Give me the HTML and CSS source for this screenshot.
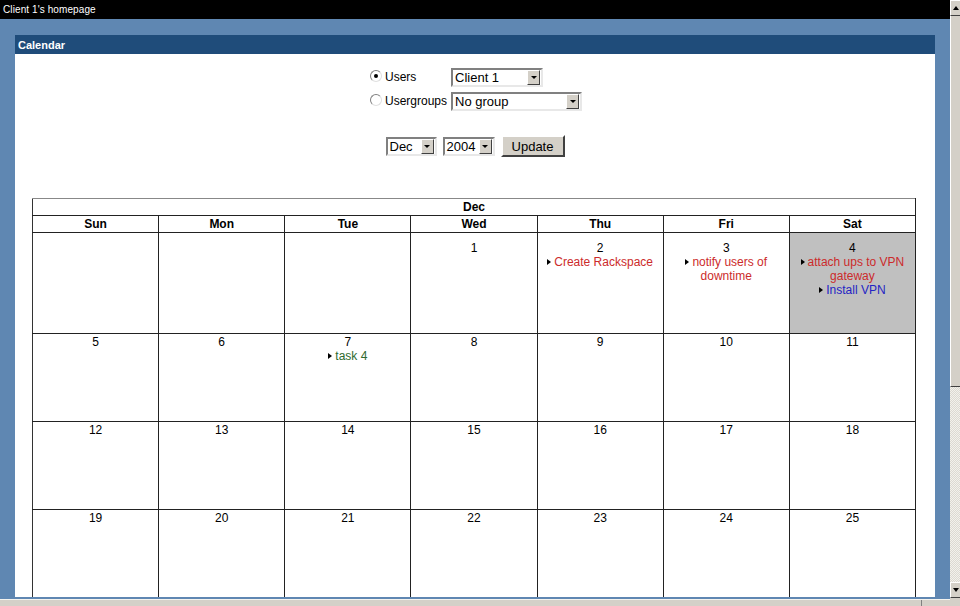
FILE: index.html
```html
<!DOCTYPE html>
<html lang="en">
<head>
  <meta charset="UTF-8">
  <title>Client 1's homepage</title>
  <link rel="stylesheet" href="styles.css">
</head>
<body>
  <div class="window">
    <div class="viewport">
      <div class="titlebar">Client 1's homepage</div>
      <div class="desk">
        <div class="panel">
          <div class="panel-head">Calendar</div>
          <div class="panel-body">
            <form class="picker">
              <table class="who">
                <tr>
                  <td class="opt"><span class="radio on"></span>Users</td>
                  <td><div class="select sel-user"><span class="val">Client 1</span><span class="drop"><i></i></span></div></td>
                </tr>
                <tr>
                  <td class="opt"><span class="radio"></span>Usergroups</td>
                  <td><div class="select sel-group"><span class="val">No group</span><span class="drop"><i></i></span></div></td>
                </tr>
              </table>
              <div class="when">
                <div class="select sel-month"><span class="val">Dec</span><span class="drop"><i></i></span></div>
                <div class="select sel-year"><span class="val">2004</span><span class="drop"><i></i></span></div>
                <button type="button" class="btn">Update</button>
              </div>
            </form>

            <table class="cal">
              <tr><th colspan="7" class="month">Dec</th></tr>
              <tr class="days">
                <th>Sun</th><th>Mon</th><th>Tue</th><th>Wed</th><th>Thu</th><th>Fri</th><th>Sat</th>
              </tr>
              <tr class="week first">
                <td></td>
                <td></td>
                <td></td>
                <td>1</td>
                <td>2<br><span class="ev red"><b class="tri"></b>Create Rackspace</span></td>
                <td>3<br><span class="ev red"><b class="tri"></b>notify users of downtime</span></td>
                <td class="today">4<br><span class="ev red"><b class="tri"></b>attach ups to VPN gateway</span><br><span class="ev blue"><b class="tri"></b>Install VPN</span></td>
              </tr>
              <tr class="week">
                <td>5</td>
                <td>6</td>
                <td>7<br><span class="ev green"><b class="tri"></b>task 4</span></td>
                <td>8</td>
                <td>9</td>
                <td>10</td>
                <td>11</td>
              </tr>
              <tr class="week">
                <td>12</td><td>13</td><td>14</td><td>15</td><td>16</td><td>17</td><td>18</td>
              </tr>
              <tr class="week">
                <td>19</td><td>20</td><td>21</td><td>22</td><td>23</td><td>24</td><td>25</td>
              </tr>
            </table>
          </div>
        </div>
      </div>
      <div class="hscroll"><span class="hthumb"></span></div>
    </div>
    <div class="vscroll">
      <div class="sbtn up"><i></i></div>
      <div class="vthumb"></div>
      <div class="vtrack"></div>
      <div class="sbtn down"><i></i></div>
      <div class="corner"></div>
    </div>
  </div>
</body>
</html>
```

FILE: styles.css
```css
html, body {
  margin: 0;
  padding: 0;
  height: 606px;
  overflow: hidden;
  font-family: "Liberation Sans", Arial, sans-serif;
  font-size: 12px;
}

.window {
  display: flex;
  height: 606px;
}

.viewport {
  width: 950px;
  display: flex;
  flex-direction: column;
  background-color: #5f87b2;
}

.titlebar {
  height: 19px;
  line-height: 20px;
  background: #000;
  color: #fff;
  font-size: 10px;
  padding-left: 3px;
  letter-spacing: 0.1px;
}

.desk {
  flex: 1;
  overflow: hidden;
  padding: 16px 15px 0 15px;
}

.panel {
  background: #fff;
  height: 100%;
}

.panel-head {
  background: #1f4c7a;
  color: #fff;
  font-weight: bold;
  font-size: 11px;
  height: 19px;
  line-height: 20px;
  padding-left: 3px;
}

.panel-body {
  padding-top: 11px;
}

/* user / group / date picker */
.picker {
  margin: 0;
}

.who {
  border-collapse: collapse;
  margin: 0 auto;
  position: relative;
  left: 1px;
}

.who td {
  padding: 0;
  height: 24px;
  vertical-align: middle;
}

.who .opt {
  padding-right: 4px;
  white-space: nowrap;
}

.radio {
  display: inline-block;
  width: 10px;
  height: 10px;
  border-radius: 50%;
  border: 1px solid #808080;
  border-right-color: #e0e0e0;
  border-bottom-color: #e0e0e0;
  background: #fff;
  vertical-align: -1px;
  margin-right: 3px;
  position: relative;
}

.radio.on::after {
  content: "";
  position: absolute;
  left: 3px;
  top: 3px;
  width: 4px;
  height: 4px;
  border-radius: 50%;
  background: #000;
}

.select {
  display: inline-flex;
  align-items: stretch;
  height: 15px;
  border: 2px solid #808080;
  border-right-color: #e8e8e8;
  border-bottom-color: #e8e8e8;
  background: #fff;
  font-size: 13px;
  vertical-align: middle;
}

.select .val {
  flex: 1;
  line-height: 15px;
  padding-left: 2px;
  white-space: nowrap;
}

.select .drop {
  width: 13px;
  background: #d4d0c8;
  border: 1px solid #fff;
  border-right-color: #404040;
  border-bottom-color: #404040;
  box-sizing: border-box;
  display: flex;
  align-items: center;
  justify-content: center;
  margin: 0 1px 0 0;
}

.select .drop i,
.sbtn.down i {
  width: 0;
  height: 0;
  border-left: 3px solid transparent;
  border-right: 3px solid transparent;
  border-top: 3px solid #000;
}

.sel-user { width: 88px; }
.sel-group { width: 127px; }
.sel-month { width: 47px; }
.sel-year { width: 48px; }

.when {
  display: flex;
  justify-content: center;
  align-items: center;
  gap: 6px;
  margin-top: 22px;
  margin-bottom: 41px;
}

.btn {
  width: 64px;
  height: 22px;
  padding: 0;
  background: #d4d0c8;
  border: 2px solid #fff;
  border-right-color: #404040;
  border-bottom-color: #404040;
  font-family: "Liberation Sans", Arial, sans-serif;
  font-size: 13px;
  color: #000;
}

/* calendar grid */
.cal {
  width: 884px;
  margin: 0 auto;
  border-collapse: collapse;
  table-layout: fixed;
  position: relative;
  left: -1px;
}

.cal th,
.cal td {
  border: 1px solid #222;
}

.cal th {
  height: 16px;
  padding: 0;
  font-size: 12px;
  line-height: 14px;
}

.cal .month {
  border-top-color: #888;
  border-left-color: #999;
}

.cal td {
  height: 86px;
  padding: 1px 2px 0;
  vertical-align: top;
  text-align: center;
  line-height: 14px;
}

.cal .first td {
  height: 92px;
  padding-top: 8px;
}

.cal tr > :first-child {
  border-left-color: #333;
}

.cal td.today {
  background: #c0c0c0;
}

.ev.red { color: #cc2b2b; }
.ev.blue { color: #2424c4; }
.ev.green { color: #2e6a2e; }

.tri {
  display: inline-block;
  width: 0;
  height: 0;
  border-top: 3px solid transparent;
  border-bottom: 3px solid transparent;
  border-left: 4px solid #000;
  margin-right: 3px;
  vertical-align: 1px;
}

/* window scrollbars */
.hscroll {
  height: 6px;
  margin-top: 2px;
  background: #d4d0c8;
  border-top: 1px solid #f4f3ef;
  position: relative;
}

.hthumb {
  position: absolute;
  right: 28px;
  top: 0;
  bottom: 0;
  width: 1px;
  background: #808080;
}

.vscroll {
  width: 10px;
  display: flex;
  flex-direction: column;
  background: #d4d0c8;
}

.sbtn {
  height: 16px;
  box-sizing: border-box;
  background: #d4d0c8;
  border-top: 1px solid #fff;
  border-left: 1px solid #fff;
  border-bottom: 1px solid #404040;
  display: flex;
  align-items: center;
  padding-left: 2px;
}

.sbtn.up i {
  width: 0;
  height: 0;
  border-left: 3px solid transparent;
  border-right: 3px solid transparent;
  border-bottom: 4px solid #000;
}

.sbtn.down i {
  border-top-width: 4px;
}

.vthumb {
  height: 370px;
  background: #d4d0c8;
  border-left: 1px solid #fff;
  border-bottom: 1px solid #404040;
}

.vtrack {
  flex: 1;
  background: repeating-conic-gradient(#f2f1ec 0 25%, #dcd9d2 0 50%) 0 0 / 2px 2px;
}

.corner {
  height: 8px;
  background: #d4d0c8;
}
```
